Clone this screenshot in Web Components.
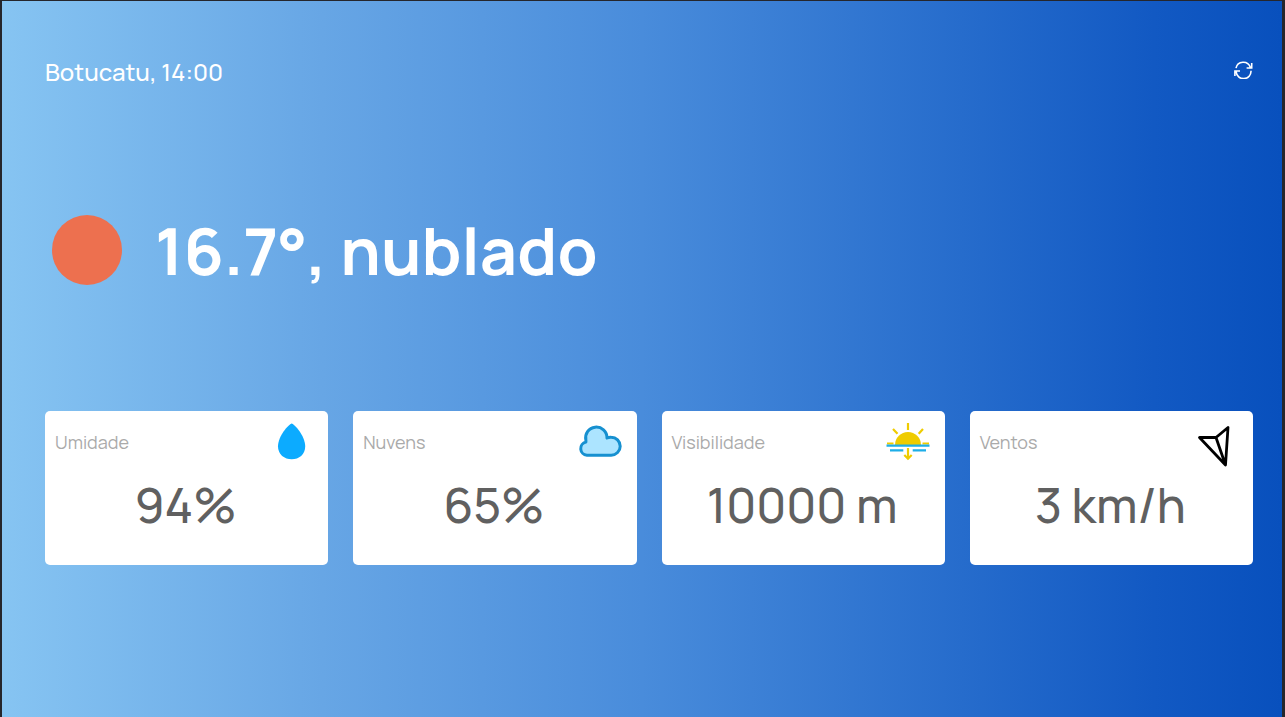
<!DOCTYPE html>
<html lang="pt-BR">
<head>
<meta charset="utf-8">
<meta name="viewport" content="width=device-width, initial-scale=1">
<title>Clima</title>
<style>
html{height:100%;background:#25262c}
body{margin:0;min-height:100%;display:flex;font-family:Manrope,Inter,sans-serif}
</style>
</head>
<body>
<weather-app>
  <weather-header slot="header">Botucatu, 14:00</weather-header>
  <weather-now slot="now">16.7°, nublado</weather-now>
  <weather-card label="Umidade">94%
    <svg slot="icon" width="48" height="48" viewBox="0 0 48 48" aria-hidden="true"><path d="M23.7 5.5C26.5 6.5 37.2 17.5 37.2 28.5C37.2 36.5 31 41.3 23.7 41.3S10 36.5 10 28.5C10 17.5 20.8 6.5 23.7 5.5Z" fill="#0cabff"/></svg>
  </weather-card>
  <weather-card label="Nuvens">65%
    <svg slot="icon" width="48" height="48" viewBox="1 0 48 48" aria-hidden="true"><path d="M10.9 37.2H35.2A9 9 0 0 0 35.2 19.2Q33 19 31 20A10.7 10.7 0 1 0 9.9 22.3V24A6.7 6.7 0 0 0 10.9 37.2Z" fill="#ace4ff" stroke="#1690d0" stroke-width="3" stroke-linejoin="round"/></svg>
  </weather-card>
  <weather-card label="Visibilidade">10000 m
    <svg slot="icon" width="48" height="48" viewBox="1 0 48 48" aria-hidden="true"><path d="M11 27A13 13 0 0 1 37 27Z" fill="#efcc00"/><g fill="none" stroke="#efcc00" stroke-width="2.2"><path d="M24 5V12M9 11L13.5 15.7M39 11L34.7 15.7M3 25.5H9.5M38.5 25.5H45M24 30V41M20.3 37L24 40.7L27.7 37"/></g><path d="M2.5 27.6H45.5M6 32.3H19.3M28.7 32.3H42" stroke="#1eaee8" stroke-width="2.3"/></svg>
  </weather-card>
  <weather-card label="Ventos">3 km/h
    <svg slot="icon" width="48" height="48" viewBox="1 0 48 48" aria-hidden="true"><path d="M7.5 19.5H24L36 9.5L33.5 47ZM24 19.5L33.5 47" fill="none" stroke="#000" stroke-width="2.8" stroke-linejoin="round"/></svg>
  </weather-card>
</weather-app>
<script>
class WeatherElement extends HTMLElement {
  connectedCallback() {
    if (!this.shadowRoot) this.attachShadow({mode: 'open'}).innerHTML = this.template();
  }
}
customElements.define('weather-app', class extends WeatherElement {
  template() { return `<style>
:host{display:block;flex:1;box-sizing:border-box;margin:1px 3px 0 2px;padding:54px 29px 40px 43px;background:linear-gradient(90deg,#86c4f2,#67a6e5 25%,#498cdb 50%,#266ccc 75%,#1259c3 90%,#0850bd)}
section{display:grid;grid-template-columns:repeat(4,minmax(0,1fr));gap:25px}
@media(max-width:900px){section{grid-template-columns:repeat(2,minmax(0,1fr))}}
</style><slot name="header"></slot><main><slot name="now"></slot><section><slot></slot></section></main>`; }
});
customElements.define('weather-header', class extends WeatherElement {
  template() { return `<style>
:host{display:block;color:#fff}
header{display:flex;justify-content:space-between;align-items:flex-start}
p{margin:0;font-size:24px;line-height:34px;font-weight:500}
button{display:block;border:0;padding:4px 0;background:none;color:inherit;cursor:pointer}
svg{display:block}
</style><header><p><slot></slot></p><button type="button" aria-label="Atualizar"><svg width="20" height="20" viewBox="0 0 20 20" fill="none" stroke="currentColor" stroke-width="1.6"><path d="M3 9.2A7.4 7.4 0 0 1 17.3 8.3M18.7 4V9H13.6M18 11.8A7.4 7.4 0 0 1 3.2 12.7M1.9 17V12H7"/></svg></button></header>`; }
});
customElements.define('weather-now', class extends WeatherElement {
  template() { return `<style>
:host{display:flex;align-items:center;gap:33px;padding:116px 7px;color:#fff}
i{flex:none;width:70px;height:70px;border-radius:50%;background:#ed704f}
h1{margin:0;padding-top:2px;font-size:65px;line-height:88px;font-weight:700}
</style><i></i><h1><slot></slot></h1>`; }
});
customElements.define('weather-card', class extends WeatherElement {
  template() { return `<style>
:host{display:block;box-sizing:border-box;padding:7px 12px 25px 10px;background:#fff;border-radius:5px}
div{display:flex;justify-content:space-between;align-items:center}
h2{margin:0;font-size:18px;line-height:24px;font-weight:400;color:#aaa}
p{margin:4px 0 0;font-size:48px;line-height:70px;font-weight:500;text-align:center;color:#606060}
::slotted(svg){display:block;overflow:visible}
</style><div><h2>${this.getAttribute('label')}</h2><slot name="icon"></slot></div><p><slot></slot></p>`; }
});
</script>
</body>
</html>
